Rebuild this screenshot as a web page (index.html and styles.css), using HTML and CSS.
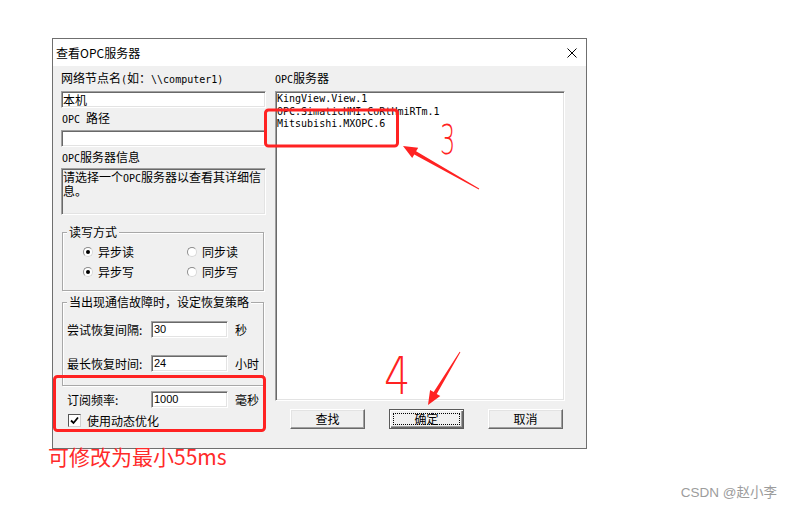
FILE: index.html
```html
<html>
  <head>
    <meta charset="utf-8">
    <link rel="stylesheet" href="styles.css">
  </head>
  <body>
    <div class="dialog">
      <div class="titlebar">
        <span class="title">查看OPC服务器</span>
        <svg class="close" width="10" height="10" viewBox="0 0 10 10">
          <path d="M0.5 0.5 L9.5 9.5 M9.5 0.5 L0.5 9.5" stroke="#000" stroke-width="1"/>
        </svg>
      </div>
      <div class="content">
        <div class="col-left">
          <div class="lbl lbl-node">网络节点名<span class="m">(</span>如：<span class="m">\\computer1)</span></div>
          <div class="edit edit-node">本机</div>
          <div class="lbl lbl-path"><span class="m">OPC </span>路径</div>
          <div class="edit edit-path"></div>
          <div class="lbl lbl-info"><span class="m">OPC</span>服务器信息</div>
          <div class="info">
            <div class="info-line">请选择一个<span class="m">OPC</span>服务器以查看其详细信</div>
            <div class="info-line">息。</div>
          </div>

          <div class="group group-mode">
            <div class="g-title">读写方式</div>
            <div class="radios">
              <div class="radio-item"><span class="radio on"></span>异步读</div>
              <div class="radio-item"><span class="radio"></span>同步读</div>
              <div class="radio-item"><span class="radio on"></span>异步写</div>
              <div class="radio-item"><span class="radio"></span>同步写</div>
            </div>
          </div>

          <div class="group group-retry">
            <div class="g-title">当出现通信故障时，设定恢复策略</div>
            <div class="field field-first">
              <span class="f-lbl">尝试恢复间隔:</span>
              <span class="edit num">30</span>
              <span class="unit">秒</span>
            </div>
            <div class="field field-second">
              <span class="f-lbl">最长恢复时间:</span>
              <span class="edit num">24</span>
              <span class="unit">小时</span>
            </div>
          </div>

          <div class="field field-rate">
            <span class="f-lbl">订阅频率:</span>
            <span class="edit num">1000</span>
            <span class="unit">毫秒</span>
          </div>
          <div class="check-row">
            <span class="check">
              <svg width="9" height="9" viewBox="0 0 9 9"><polyline points="1,4.5 3.5,7 8,1.5" fill="none" stroke="#000" stroke-width="1.8"/></svg>
            </span>
            使用动态优化
          </div>
        </div>

        <div class="col-right">
          <div class="lbl lbl-node"><span class="m">OPC</span>服务器</div>
          <div class="listbox">
            <div class="item">KingView.View.1</div>
            <div class="item">OPC.SimaticHMI.CoRtHmiRTm.1</div>
            <div class="item">Mitsubishi.MXOPC.6</div>
          </div>
          <div class="buttons">
            <div class="btn">查找</div>
            <div class="btn btn-default"><span class="focus">确定</span></div>
            <div class="btn">取消</div>
          </div>
        </div>
      </div>
    </div>

    <div class="note">可修改为最小55ms</div>
    <div class="watermark">CSDN @赵小李</div>

    <svg class="marks" width="794" height="510" viewBox="0 0 794 510">
      <rect x="54.5" y="376.5" width="210" height="54" rx="3" fill="none" stroke="#ff2222" stroke-width="3"/>
      <rect x="265.5" y="110" width="132" height="36" rx="3" fill="none" stroke="#ff2222" stroke-width="3"/>
      <polygon points="479.2,188.6 416.1,151.3 418.2,147.7 403,146 412.2,158.1 414.3,154.5 478.8,189.4" fill="#ff2222"/>
      <polygon points="460.4,352.3 436.7,393.9 440.3,396.1 428,405 430.1,389.9 433.7,392.1 459.6,351.7" fill="#ff2222"/>
      <text class="hand" transform="translate(440 154) scale(0.6 1)" font-size="40">3</text>
      <text class="hand" transform="translate(384 394) scale(0.8 1)" font-size="52">4</text>
    </svg>
  </body>
</html>
```

FILE: styles.css
```css
* { box-sizing: border-box; }

body {
  margin: 0;
  width: 794px;
  height: 510px;
  background-color: #fff;
  position: relative;
  overflow: hidden;
  font-family: "Noto Sans CJK SC", sans-serif;
  font-size: 12px;
  color: #000;
}

.m { font-family: "DejaVu Sans Mono", monospace; font-size: 10px; }

/* window frame */
.dialog {
  margin: 38px 0 0 52px;
  width: 535px;
  height: 411px;
  border: 1px solid #6f6f6f;
  background-color: #f0f0f0;
}

.titlebar {
  height: 27px;
  background-color: #fff;
  display: flex;
  align-items: center;
  justify-content: space-between;
  padding: 0 9px 0 3px;
}
.title { line-height: 14px; }

.content {
  display: grid;
  grid-template-columns: 205px 290px;
  column-gap: 9px;
  padding-left: 8px;
}

.lbl { line-height: 14px; height: 14px; white-space: nowrap; }
.lbl-node { margin-top: 5px; }
.lbl-path { margin-top: 3px; padding-left: 1px; }
.lbl-info { margin-top: 3px; padding-left: 1px; }

/* sunken fields */
.edit, .info, .listbox {
  border-style: solid;
  border-width: 1px;
  border-color: #a0a0a0 #fff #fff #a0a0a0;
  box-shadow: inset 1px 1px 0 #696969, inset -1px -1px 0 #e3e3e3;
}

.edit {
  display: block;
  height: 17px;
  background-color: #fff;
  line-height: 15px;
  padding-left: 1px;
}
.edit-node { margin-top: 6px; }
.edit-path { margin-top: 5px; }

.info {
  margin-top: 4px;
  height: 47px;
  padding: 1px 0 0 1px;
}
.info-line { line-height: 14px; height: 14px; white-space: nowrap; }

/* group boxes */
.group {
  margin-left: 1px;
  width: 202px;
  border: 1px solid #a8a8a8;
  box-shadow: inset 1px 1px 0 #fff, 1px 1px 0 #fff;
}
.g-title {
  display: inline-block;
  margin: -8px 0 0 4px;
  padding: 0 2px;
  background-color: #f0f0f0;
  line-height: 14px;
  vertical-align: top;
}
.group-mode { margin-top: 17px; height: 59px; }
.group-retry { margin-top: 11px; height: 84px; }

.radios {
  display: grid;
  grid-template-columns: 104px auto;
  row-gap: 6px;
  margin-top: 6px;
  padding-left: 20px;
}
.radio-item {
  display: flex;
  align-items: center;
  gap: 5px;
  line-height: 14px;
}
.radio {
  width: 10px;
  height: 10px;
  border-radius: 50%;
  background-color: #fff;
  border: 1px solid #8c8c8c;
  border-bottom-color: #d8d8d8;
  border-right-color: #d8d8d8;
  display: flex;
  align-items: center;
  justify-content: center;
}
.radio.on::after {
  content: "";
  width: 4px;
  height: 4px;
  border-radius: 50%;
  background-color: #000;
}

/* numeric rows */
.field {
  display: flex;
  align-items: center;
  height: 17px;
  padding-left: 4px;
}
.field-first { margin-top: 12px; }
.field-second { margin-top: 17px; }
.field-rate { margin-top: 5px; padding-left: 6px; }
.f-lbl { width: 84px; white-space: nowrap; }
.num {
  width: 77px;
  font-family: "Liberation Sans", sans-serif;
  font-size: 11px;
  padding-left: 2px;
}
.unit { margin-left: 7px; white-space: nowrap; }

.check-row {
  display: flex;
  align-items: center;
  gap: 6px;
  margin-top: 6px;
  padding-left: 7px;
  line-height: 13px;
}
.check {
  width: 13px;
  height: 13px;
  background-color: #fff;
  border: 1px solid;
  border-color: #555 #d0d0d0 #d0d0d0 #555;
  display: flex;
  align-items: center;
  justify-content: center;
}

/* right column */
.listbox {
  margin-top: 6px;
  height: 310px;
  background-color: #fff;
  padding: 1px 0 0 1px;
  font-family: "DejaVu Sans Mono", monospace;
  font-size: 10px;
}
.item { line-height: 12.5px; height: 12.5px; white-space: nowrap; }

.buttons {
  display: flex;
  gap: 24px;
  margin-top: 8px;
  padding-left: 15px;
}
.btn {
  width: 75px;
  height: 20px;
  display: flex;
  align-items: center;
  justify-content: center;
  background-color: #f0f0f0;
  border: 1px solid;
  border-color: #fff #696969 #696969 #fff;
  box-shadow: inset -1px -1px 0 #a0a0a0, inset 1px 1px 0 #e3e3e3;
  line-height: 14px;
}
.btn-default {
  border-color: #5a5a5a;
  box-shadow: inset 1px 1px 0 #fff, inset -1px -1px 0 #696969, inset -2px -2px 0 #a0a0a0;
  padding: 3px;
}
.focus {
  width: 100%;
  height: 100%;
  border: 1px dotted #000;
  display: flex;
  align-items: center;
  justify-content: center;
}

/* annotations */
.note {
  margin: -4px 0 0 48px;
  height: 22px;
  line-height: 22px;
  font-size: 21px;
  color: #ff2a2a;
  white-space: nowrap;
}

.watermark {
  margin-top: 18px;
  line-height: 16px;
  text-align: right;
  padding-right: 17px;
  font-family: "Liberation Sans", "Noto Sans CJK SC", sans-serif;
  font-size: 13.5px;
  color: #9c9c9c;
}

.marks {
  position: absolute;
  left: 0;
  top: 0;
  pointer-events: none;
}
.hand {
  font-family: "DejaVu Sans ExtraLight", "DejaVu Sans", sans-serif;
  font-weight: 200;
  fill: #ff2222;
}
```
